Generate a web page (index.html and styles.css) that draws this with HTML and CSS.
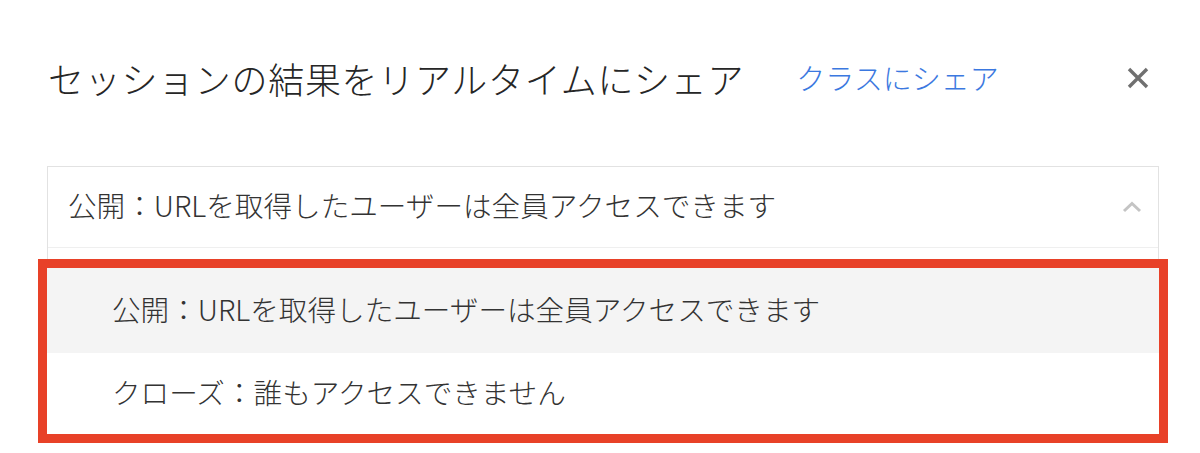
FILE: index.html
```html
<!DOCTYPE html>
<html lang="ja">
<head>
<meta charset="utf-8">
<title>セッションの結果をリアルタイムにシェア</title>
<link rel="stylesheet" href="styles.css">
</head>
<body>
<div class="dialog">
  <div class="dialog-header">
    <h1 class="dialog-title">セッションの結果をリアルタイムにシェア</h1>
    <a class="class-share" href="#">クラスにシェア</a>
    <button class="close-btn" aria-label="閉じる">
      <svg width="22" height="22" viewBox="0 0 22 22"><path d="M2 2L20 20M20 2L2 20" stroke="#707070" stroke-width="3.4" stroke-linecap="butt" fill="none"/></svg>
    </button>
  </div>
  <div class="select">
    <div class="select-head">
      <span class="select-value">公開：URLを取得したユーザーは全員アクセスできます</span>
      <svg class="chevron" width="20" height="12" viewBox="0 0 20 12"><path d="M2 10L10 2.5L18 10" stroke="#c4c4c4" stroke-width="3" fill="none"/></svg>
    </div>
    <div class="select-gap"></div>
    <ul class="menu">
      <li class="menu-item active">公開：URLを取得したユーザーは全員アクセスできます</li>
      <li class="menu-item">クローズ：誰もアクセスできません</li>
    </ul>
  </div>
</div>
</body>
</html>
```

FILE: styles.css
```css
* { box-sizing: border-box; }
html, body {
  margin: 0;
  padding: 0;
  background: #ffffff;
}
body {
  min-height: 453px;
  font-family: "Noto Sans CJK JP", "Noto Sans", sans-serif;
  font-weight: 300;
  color: #333333;
}
.dialog {
  width: 1200px;
  padding-bottom: 19px;
}
.dialog-header {
  height: 155px;
  display: flex;
  align-items: center;
  padding: 0 51px 0 48px;
}
.dialog-title {
  margin: 0;
  font-size: 36px;
  font-weight: 300;
  letter-spacing: 0.7px;
  line-height: 1;
  color: #262626;
}
.class-share {
  margin-left: 52px;
  font-size: 29px;
  line-height: 1;
  color: #3b78e0;
  text-decoration: none;
}
.close-btn {
  margin-left: auto;
  width: 22px;
  height: 22px;
  padding: 0;
  border: 0;
  background: none;
  display: flex;
}
.select {
  margin: 11px 41px 0 47px;
  border: 1px solid #e2e2e2;
  border-bottom: 0;
}
.select-head {
  height: 81px;
  display: flex;
  align-items: center;
  padding: 0 16px 0 20px;
  border-bottom: 1px solid #efefef;
}
.select-value {
  font-size: 28.6px;
  line-height: 1;
  color: #333333;
  margin-top: -3px;
}
.chevron {
  margin-left: auto;
}
.select-gap {
  height: 20px;
}
.menu {
  list-style: none;
  margin: 0 -1px;
  padding: 0;
  outline: 9px solid #e84128;
  background: #ffffff;
}
.menu-item {
  display: flex;
  align-items: center;
  height: 83px;
  padding: 0 0 3px 65px;
  font-size: 28.6px;
  line-height: 1;
  color: #333333;
}
.menu-item.active {
  height: 85px;
  background: #f4f4f4;
}
.menu-item + .menu-item {
  height: 81px;
}
```
